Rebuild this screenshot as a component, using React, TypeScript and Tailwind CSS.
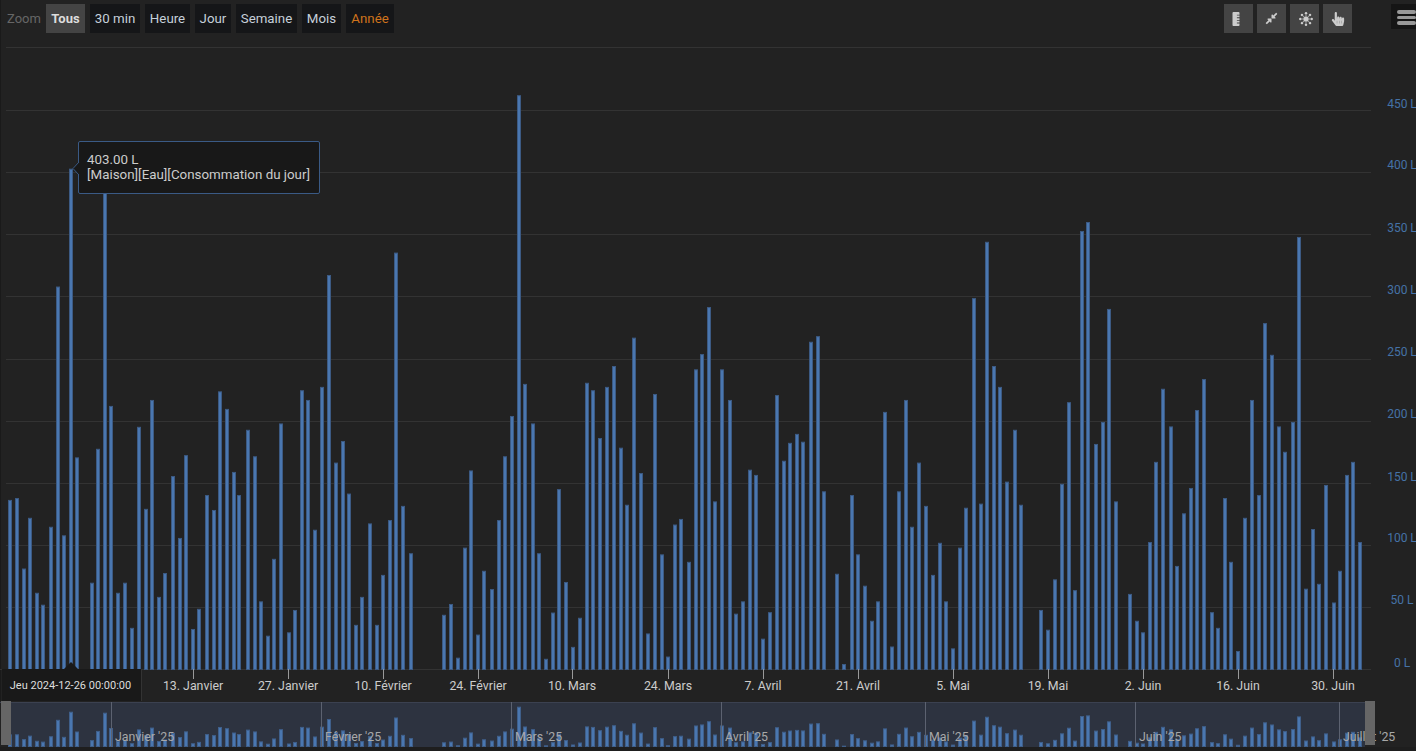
import { FaRulerVertical, FaCompressAlt, FaHandPointer } from "react-icons/fa";

// bars as read off the chart: [x in crop (3x), top of bar in crop]
const crops: { x0: number; bars: number[][] }[] = [
  {
    x0: 0,
    bars: [
      [30, 1100], [51, 1095], [71, 1284], [90, 1148], [110, 1349], [130, 1381], [153, 1172], [173, 528], [192, 1195],
      [212, 212], [232, 986], [275, 1322], [295, 963], [314, 250], [334, 848], [354, 1349], [374, 1322], [397, 1443],
      [417, 904], [437, 1124], [456, 832], [476, 1360], [496, 1296], [519, 1036], [539, 1202], [558, 980], [579, 1446],
      [598, 1392], [621, 1087], [641, 1127], [661, 809], [681, 856], [701, 1025], [718, 1087],
    ],
  },
  {
    x0: 235,
    bars: [
      [39, 912], [59, 983], [78, 1372], [98, 1464], [118, 1258], [138, 895], [161, 1455], [181, 1395], [200, 806],
      [220, 832], [240, 1180], [260, 797], [283, 497], [303, 1000], [323, 942], [342, 1083], [362, 1435], [381, 1360],
      [405, 1163], [425, 1435], [444, 1301], [464, 1154], [484, 437], [504, 1116], [527, 1243], [626, 1408], [649, 1379],
      [669, 1523], [689, 1228], [708, 1021],
    ],
  },
  {
    x0: 470,
    bars: [
      [23, 1461], [43, 1290], [66, 1339], [86, 1154], [106, 983], [126, 875], [146, 15], [165, 789], [189, 895],
      [208, 1243], [228, 1526], [248, 1402], [267, 1071], [287, 1320], [310, 1494], [330, 1416], [350, 786], [370, 806],
      [390, 934], [410, 797], [432, 741], [452, 960], [472, 1113], [492, 665], [512, 1028], [535, 1458], [555, 816],
      [575, 1246], [594, 1520], [614, 1166], [634, 1151], [657, 1266], [677, 750], [697, 709], [716, 583],
    ],
  },
  {
    x0: 705,
    bars: [
      [31, 1104], [51, 750], [75, 832], [94, 1405], [114, 1372], [134, 1019], [153, 1033], [173, 1472], [196, 1401],
      [216, 819], [236, 995], [255, 947], [275, 923], [295, 944], [318, 676], [339, 661], [358, 1077], [397, 1298],
      [417, 1540], [441, 1087], [460, 1246], [480, 1330], [500, 1424], [519, 1372], [540, 864], [562, 1493], [582, 1077],
      [603, 832], [621, 1172], [641, 1000], [662, 1116], [684, 1301], [705, 1215],
    ],
  },
  {
    x0: 940,
    bars: [
      [18, 1372], [39, 1498], [59, 1228], [78, 1121], [102, 559], [122, 1110], [141, 408], [161, 741], [180, 797],
      [201, 1051], [225, 912], [243, 1113], [303, 1395], [323, 1448], [345, 1313], [366, 1057], [386, 838], [405, 1342],
      [425, 379], [444, 355], [468, 950], [488, 891], [507, 588], [527, 1104], [570, 1352], [590, 1424], [609, 1455],
      [630, 1213], [649, 998], [669, 802], [693, 903], [711, 1277],
    ],
  },
  {
    x0: 1175,
    bars: [
      [27, 1136], [47, 1068], [66, 859], [86, 776], [110, 1401], [129, 1443], [149, 1095], [168, 1266], [188, 1505],
      [209, 1148], [231, 832], [251, 1087], [271, 626], [291, 711], [311, 903], [330, 971], [353, 891], [373, 395],
      [393, 1338], [413, 1178], [432, 1325], [452, 1060], [476, 1375], [495, 1290], [515, 1033], [535, 998], [555, 1213],
    ],
  },
];

const bars = crops.flatMap((c) =>
  c.bars.map(([x, y]) => ({ x: Math.round(c.x0 + x / 3 - 2), h: (1552 - y) * 0.373 + 0.5 }))
);

const gridLines = [47, 110, 172, 234, 296, 359, 421, 483, 545, 607];

const yLabels = [
  ["450 L", 108], ["400 L", 169], ["350 L", 232], ["300 L", 294], ["250 L", 356],
  ["200 L", 418], ["150 L", 481], ["100 L", 542], ["50 L", 604], ["0 L", 667],
] as const;

const xLabels = [
  ["13. Janvier", 193], ["27. Janvier", 288], ["10. Février", 383], ["24. Février", 478], ["10. Mars", 572],
  ["24. Mars", 668], ["7. Avril", 763], ["21. Avril", 858], ["5. Mai", 953], ["19. Mai", 1048],
  ["2. Juin", 1143], ["16. Juin", 1238], ["30. Juin", 1333],
] as const;

const navLabels = [
  ["Janvier '25", 111], ["Février '25", 321], ["Mars '25", 511], ["Avril '25", 721],
  ["Mai '25", 925], ["Juin '25", 1135], ["Juillet '25", 1339],
] as const;

const ranges = [
  { label: "30 min", w: "w-[50px]" },
  { label: "Heure", w: "w-[45px]" },
  { label: "Jour", w: "w-[36px]" },
  { label: "Semaine", w: "w-[61px]" },
  { label: "Mois", w: "w-[39px]" },
];

function SunIcon() {
  const rays = [0, 45, 90, 135, 180, 225, 270, 315];
  return (
    <svg width="14" height="14" viewBox="0 0 14 14" className="text-[#cccccc] ml-[2px]">
      <circle cx="7" cy="7" r="2.6" fill="currentColor" />
      {rays.map((a) => (
        <g key={a} transform={`rotate(${a} 7 7)`}>
          <rect x="6.5" y="2.6" width="1" height="2.2" fill="currentColor" opacity="0.7" />
          <circle cx="7" cy="1.3" r="1.25" fill="currentColor" />
        </g>
      ))}
    </svg>
  );
}

const IconButton = ({ children }: { children: React.ReactNode }) => (
  <div className="w-[29px] h-[29px] bg-[#444444] flex items-center justify-center text-[#cccccc]">{children}</div>
);

export default function App() {
  return (
    <div className="relative w-[1416px] h-[751px] overflow-hidden bg-[#222222] shadow-[inset_1px_0_0_#1a1a1a] [font-family:Roboto,sans-serif]">
      {/* Toolbar */}
      <div className="flex items-start h-[38px] pt-[4px] pl-[7px]">
        <span className="w-[39px] h-[29px] leading-[29px] text-[13px] text-[#666666]">Zoom</span>
        <div className="flex gap-[5px]">
          <div className="w-[39px] h-[29px] leading-[29px] text-center text-[13px] font-bold bg-[#444444] text-[#dddddd]">Tous</div>
          {ranges.map((r) => (
            <div key={r.label} className={`${r.w} h-[29px] leading-[29px] text-center text-[13.3px] bg-[#151618] text-[#c6d0da]`}>
              {r.label}
            </div>
          ))}
          <div className="w-[48px] h-[29px] leading-[29px] text-center text-[13.3px] bg-[#151618] text-[#d0741c]">Année</div>
        </div>
        <div className="ml-auto flex gap-[4px]">
          <IconButton><FaRulerVertical size={14} className="mr-[5px]" /></IconButton>
          <IconButton><FaCompressAlt size={13} /></IconButton>
          <IconButton><SunIcon /></IconButton>
          <IconButton><FaHandPointer size={14} /></IconButton>
        </div>
        <div className="ml-[39px] w-[25px] h-[25px] bg-[#151515] flex flex-col gap-[2px] pl-[6px] pt-[6px]">
          <div className="h-[3.5px] w-[19px] rounded-[2px] bg-[#999999]" />
          <div className="h-[3.5px] w-[19px] rounded-[2px] bg-[#999999]" />
          <div className="h-[3.5px] w-[19px] rounded-[2px] bg-[#999999]" />
        </div>
      </div>

      {/* Chart */}
      <svg width="1416" height="713" viewBox="0 38 1416 713" className="block">
        {gridLines.map((y) => (
          <rect key={y} x="6" y={y} width="1365" height="1" fill="#333333" />
        ))}
        <rect x="0" y="669" width="1371" height="1" fill="#333333" />

        {bars.map((b, i) => (
          <rect key={i} x={b.x + 0.5} y={669.5 - b.h} width="3" height={b.h} fill="#4a77b0" stroke="#3c5a83" strokeWidth="1" />
        ))}

        {yLabels.map(([t, y]) => (
          <text key={t} x="1402" y={y} textAnchor="middle" className="text-[12px] fill-[#4572a7]">{t}</text>
        ))}

        {xLabels.map(([t, x]) => (
          <g key={t}>
            <rect x={x} y="669" width="1" height="10" fill="#999999" />
            <text x={x} y="690" textAnchor="middle" className="text-[12.35px] fill-[#cccccc]">{t}</text>
          </g>
        ))}

        {/* Navigator */}
        <rect x="0" y="701" width="1416" height="50" fill="#222222" />
        <rect x="11" y="702" width="1354" height="45" fill="#2d3340" />
        <rect x="0" y="702" width="1372" height="1" fill="#3b4150" />
        <rect x="0" y="747" width="1416" height="4" fill="#1e1e1e" />
        {bars.map((b, i) => (
          <rect key={i} x={b.x + 0.5} y={746.5 - b.h * 0.0685} width="3" height={b.h * 0.0685} fill="#4a77b0" stroke="#3f5f8a" strokeWidth="1" />
        ))}
        {navLabels.map(([t, x]) => (
          <g key={t}>
            <rect x={x} y="702" width="1" height="45" fill="#5c6270" />
            <text x={x + 4} y="741" className="text-[12.35px] fill-[#a8a8a8]">{t}</text>
          </g>
        ))}
        <rect x="1" y="701" width="10" height="44" fill="#666666" />
        <rect x="1365" y="701" width="10" height="44" fill="#666666" />
      </svg>

      {/* Tooltip */}
      <div className="absolute left-[78px] top-[141px] w-[242px] h-[53px] bg-[#181818] border border-[#3a5a85] rounded-[2px] pl-[8px] pt-[10px] text-[13.35px] leading-[15px] text-[#cccccc]">
        <svg width="8" height="14" viewBox="0 0 8 14" className="absolute left-[-7px] top-[20px]">
          <path d="M7 0 L1 6.5 L7 13" fill="#181818" stroke="#3a5a85" />
        </svg>
        <div>403.00 L</div>
        <div>[Maison][Eau][Consommation du jour]</div>
      </div>

      {/* Date flag */}
      <div className="absolute left-[2px] top-[669px] w-[140px] h-[32px] bg-[#191919] border-r border-[#333333] pr-[2px] text-[11px] leading-[34px] text-center text-[#dddddd]">
        <svg width="16" height="8" viewBox="0 0 16 8" className="absolute left-[61px] top-[-7px]">
          <path d="M0 8 L8 0 L16 8 Z" fill="#191919" />
        </svg>
        Jeu 2024-12-26 00:00:00
      </div>
    </div>
  );
}
